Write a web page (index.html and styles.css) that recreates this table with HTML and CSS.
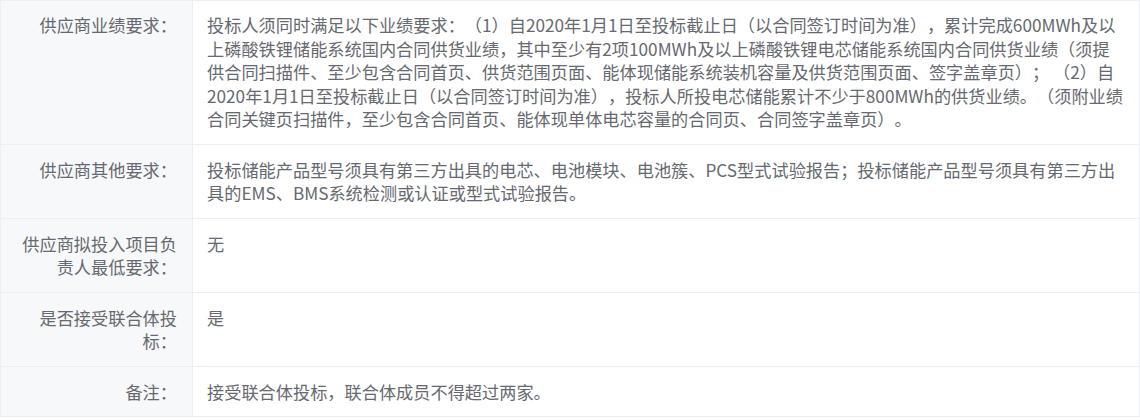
FILE: index.html
```html
<!DOCTYPE html>
<html lang="zh-CN">
<head>
    <meta charset="UTF-8">
    <meta name="viewport" content="width=device-width, initial-scale=1.0">
    <title>供应商要求</title>
    <link rel="stylesheet" href="styles.css">
</head>
<body>
    <table class="desc-table">
        <tbody>
            <tr>
                <th class="desc-label">供应商业绩要求：</th>
                <td class="desc-value">投标人须同时满足以下业绩要求：（1）自2020年1月1日至投标截止日（以合同签订时间为准），累计完成600MWh及以上磷酸铁锂储能系统国内合同供货业绩，其中至少有2项100MWh及以上磷酸铁锂电芯储能系统国内合同供货业绩（须提供合同扫描件、至少包含合同首页、供货范围页面、能体现储能系统装机容量及供货范围页面、签字盖章页）； （2）自2020年1月1日至投标截止日（以合同签订时间为准），投标人所投电芯储能累计不少于800MWh的供货业绩。（须附业绩合同关键页扫描件，至少包含合同首页、能体现单体电芯容量的合同页、合同签字盖章页）。</td>
            </tr>
            <tr>
                <th class="desc-label">供应商其他要求：</th>
                <td class="desc-value">投标储能产品型号须具有第三方出具的电芯、电池模块、电池簇、PCS型式试验报告；投标储能产品型号须具有第三方出具的EMS、BMS系统检测或认证或型式试验报告。</td>
            </tr>
            <tr>
                <th class="desc-label">供应商拟投入项目负责人最低要求：</th>
                <td class="desc-value">无</td>
            </tr>
            <tr>
                <th class="desc-label">是否接受联合体投标：</th>
                <td class="desc-value">是</td>
            </tr>
            <tr>
                <th class="desc-label">备注：</th>
                <td class="desc-value">接受联合体投标，联合体成员不得超过两家。</td>
            </tr>
        </tbody>
    </table>
</body>
</html>
```

FILE: styles.css
```css
body {
    margin: 0;
    background-color: #ffffff;
    font-family: "Noto Sans CJK SC", "Noto Sans", sans-serif;
    font-size: 17.2px;
    line-height: 23.5px;
    color: #66696f;
    text-spacing-trim: space-all;
}
.desc-table {
    width: 1140px;
    border-collapse: collapse;
    table-layout: fixed;
}
.desc-label,
.desc-value {
    border: 1px solid #ebeef5;
    padding: 13px 14px;
    vertical-align: top;
}
.desc-table tr:first-child > * {
    padding-top: 12px;
}
.desc-label {
    width: 192px;
    box-sizing: border-box;
    padding: 13px 15px 13px 18px;
    background-color: #f7f8fa;
    font-weight: normal;
    text-align: right;
}
.desc-value {
    text-align: left;
}
```
